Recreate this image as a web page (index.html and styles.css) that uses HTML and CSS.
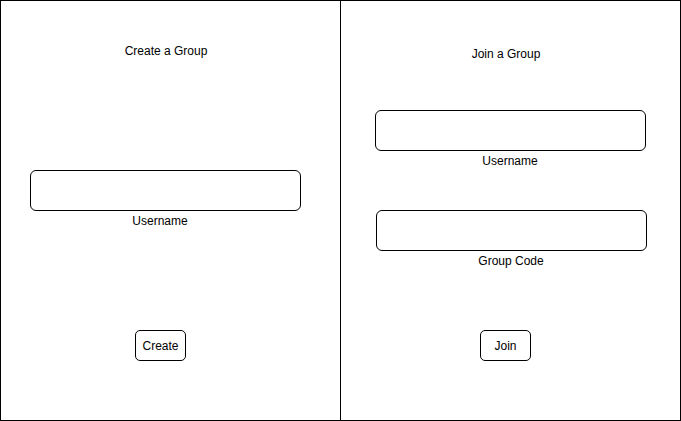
FILE: index.html
```html
<!DOCTYPE html>
<html>
<head>
<meta charset="utf-8">
<link rel="stylesheet" href="styles.css">
</head>
<body>
<div class="frame">
  <section class="panel panel-create">
    <div class="title">Create a Group</div>
    <div class="field field-create"></div>
    <div class="label label-create">Username</div>
    <div class="btn btn-create">Create</div>
  </section>
  <div class="divider"></div>
  <section class="panel panel-join">
    <div class="title">Join a Group</div>
    <div class="field field-user"></div>
    <div class="label label-user">Username</div>
    <div class="field field-code"></div>
    <div class="label label-code">Group Code</div>
    <div class="btn btn-join">Join</div>
  </section>
</div>
</body>
</html>
```
FILE: styles.css
```css
html, body {
  margin: 0;
  padding: 0;
  background: #fff;
}
body {
  font-family: "Liberation Sans", Arial, sans-serif;
  font-size: 12px;
  line-height: 14px;
  color: #000;
}
.frame {
  box-sizing: border-box;
  width: 681px;
  height: 421px;
  border: 1px solid #000;
  display: grid;
  grid-template-columns: 339px 1px 339px;
}
.divider {
  background: #000;
}
.panel {
  display: flex;
  flex-direction: column;
  align-items: flex-start;
}
.title, .label {
  width: 100px;
  text-align: center;
  white-space: nowrap;
}
.field {
  box-sizing: border-box;
  width: 271px;
  height: 41px;
  border: 1px solid #000;
  border-radius: 6px;
}
.btn {
  box-sizing: border-box;
  width: 51px;
  height: 31px;
  border: 1px solid #000;
  border-radius: 5px;
  display: flex;
  align-items: center;
  justify-content: center;
}

/* left panel */
.panel-create .title { margin: 43px 0 0 115px; }
.field-create { margin: 112px 0 0 29px; }
.label-create { margin: 3px 0 0 109px; }
.btn-create { margin: 102px 0 0 134px; }

/* right panel */
.panel-join .title { margin: 46px 0 0 115px; }
.field-user { margin: 49px 0 0 34px; }
.label-user { margin: 3px 0 0 119px; }
.field-code { margin: 42px 0 0 35px; }
.label-code { margin: 3px 0 0 120px; }
.btn-join { margin: 62px 0 0 139px; }
```
